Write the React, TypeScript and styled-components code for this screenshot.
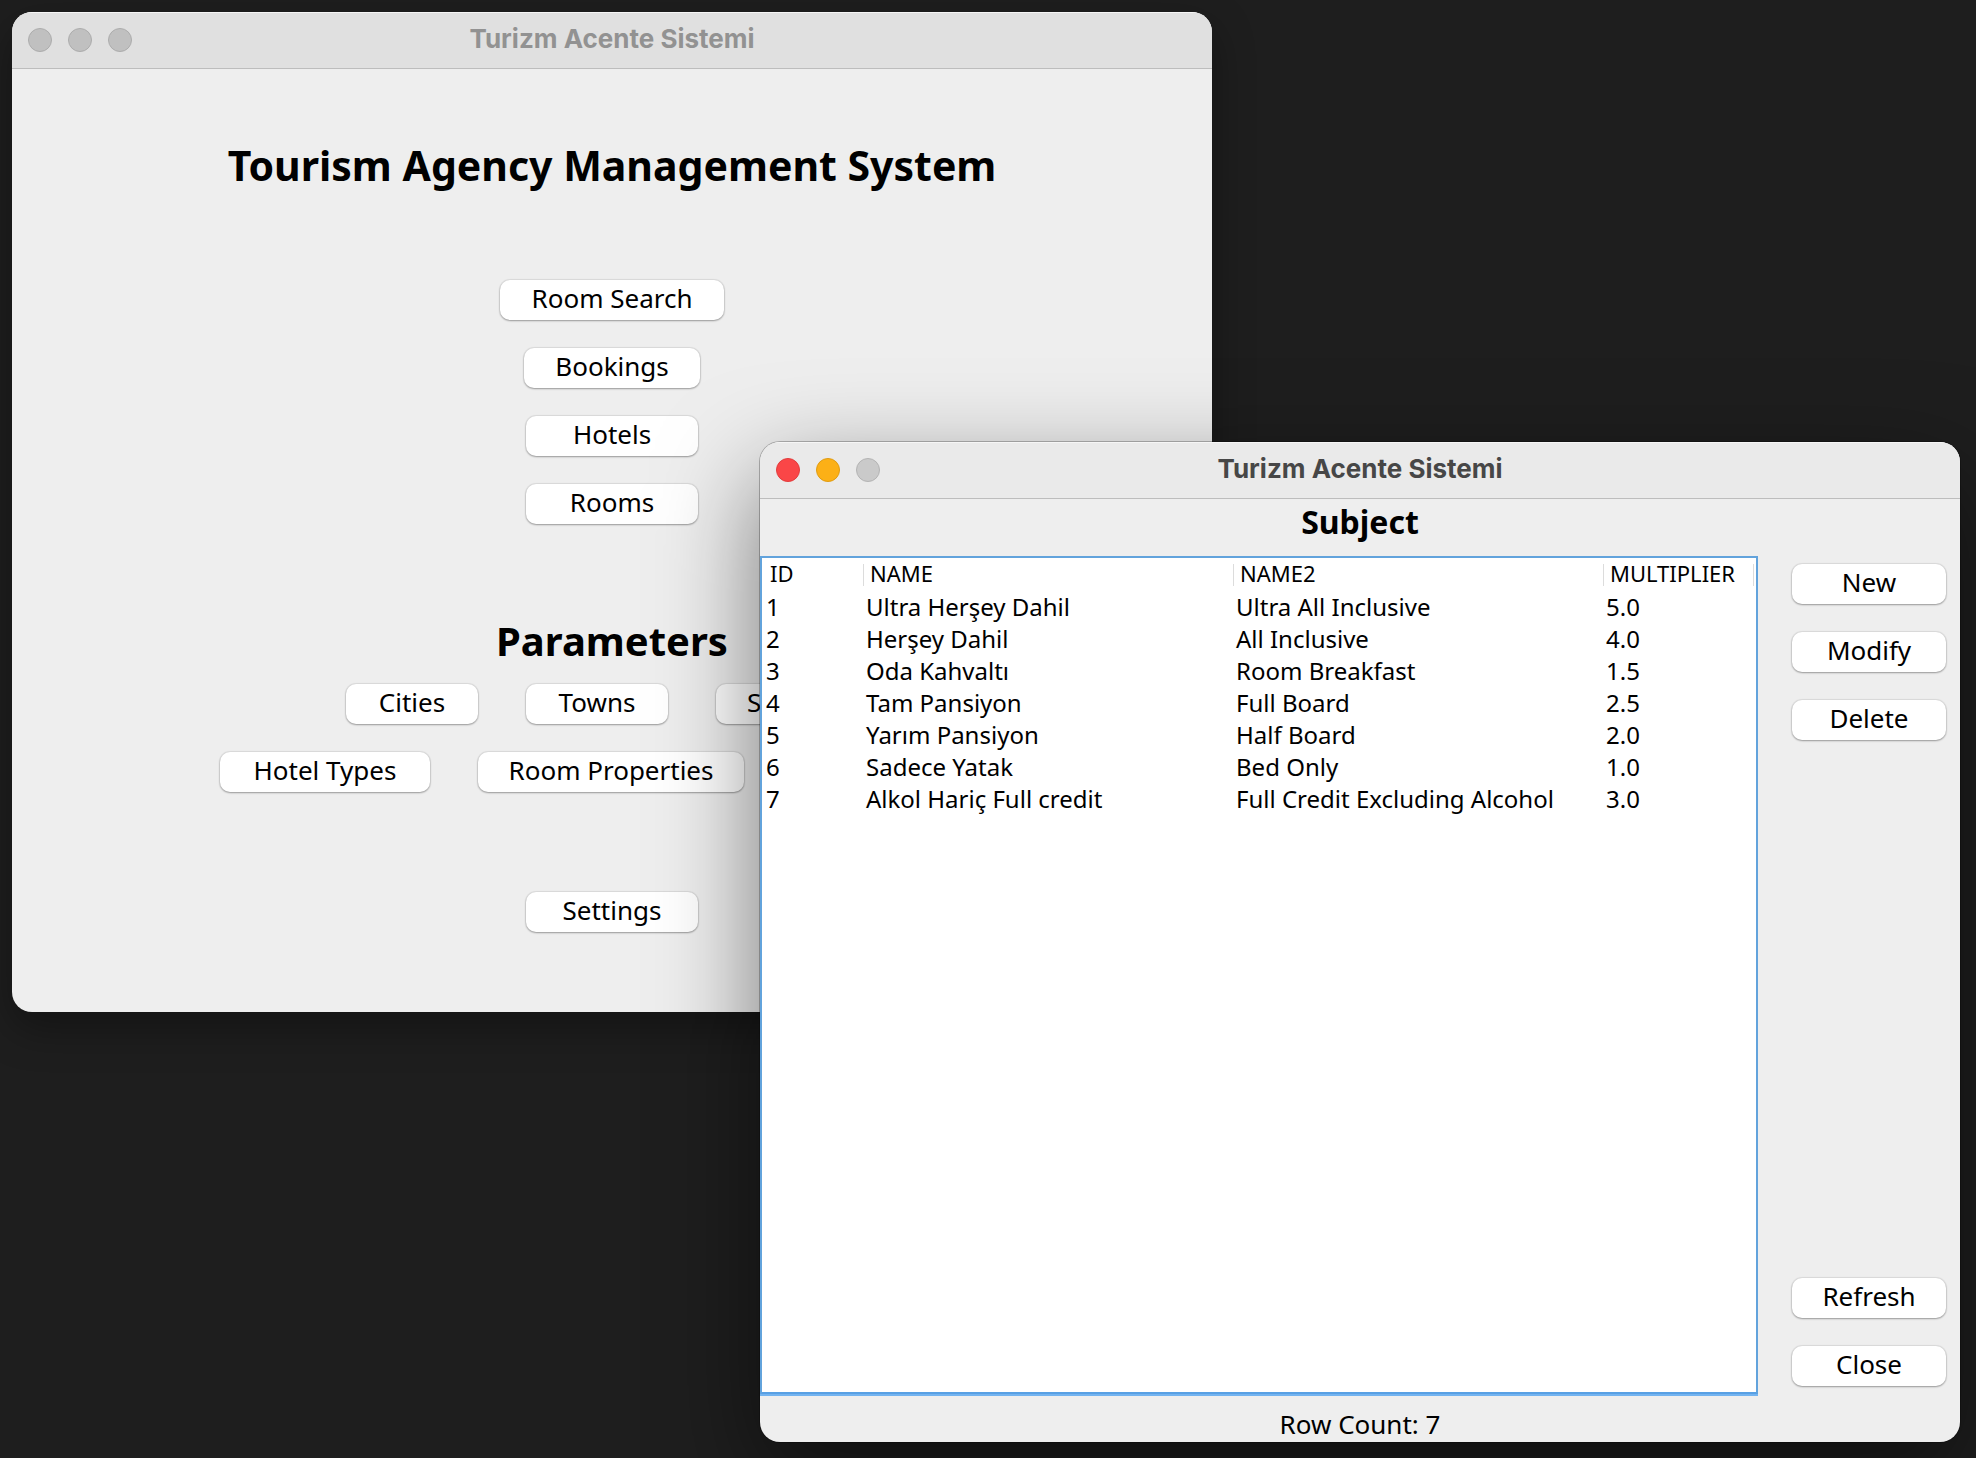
import React from 'react';
import styled, { createGlobalStyle, css } from 'styled-components';

const GlobalStyle = createGlobalStyle`
  *, *::before, *::after { box-sizing: border-box; }
  body { margin: 0; background: #1e1e1e; }
  body, button, table { font-family: 'Noto Sans', 'Open Sans', sans-serif; color: #000; }
`;

const Desktop = styled.div`
  position: relative;
  min-height: 100vh;
  overflow: hidden;
  background: #1e1e1e;
`;

const Window = styled.section<{ $active?: boolean }>`
  position: absolute;
  width: min(1200px, calc(100% - 28px));
  min-height: 1000px;
  display: flex;
  flex-direction: column;
  overflow: hidden;
  border-radius: 20px;
  background: #eeeeee;
  ${({ $active }) =>
    $active
      ? css`
          right: 16px;
          bottom: 16px;
          box-shadow: 0 0 0 1px rgba(0, 0, 0, 0.25), 0 36px 100px rgba(0, 0, 0, 0.5);
        `
      : css`
          left: 12px;
          top: 12px;
          box-shadow: 0 16px 40px rgba(0, 0, 0, 0.35);
        `}
`;

const TitleBar = styled.header<{ $active?: boolean }>`
  display: grid;
  grid-template-columns: 1fr auto 1fr;
  align-items: center;
  height: 57px;
  padding: 0 16px;
  border-bottom: 1px solid #bdbdbd;
  box-shadow: inset 0 1px 0 #f6f6f6;
  background: ${({ $active }) => ($active ? '#eaeaea' : '#e0e0e0')};
  color: ${({ $active }) => ($active ? '#474747' : '#929292')};
`;

const Lights = styled.div`
  display: flex;
  gap: 16px;
`;

const Light = styled.button<{ $fill: string; $edge: string }>`
  width: 24px;
  height: 24px;
  padding: 0;
  border: 1px solid ${({ $edge }) => $edge};
  border-radius: 50%;
  background: ${({ $fill }) => $fill};
`;

const WindowTitle = styled.span`
  padding-bottom: 2px;
  font: 700 26px/32px Inter, 'Liberation Sans', sans-serif;
`;

const PushButton = styled.button<{ $width: number }>`
  height: 40px;
  min-width: ${({ $width }) => $width}px;
  padding: 0 24px 4px;
  border: 0;
  border-radius: 10px;
  background: #fff;
  box-shadow: 0 0 1px 1px rgba(0, 0, 0, 0.08), 0 1px 2px rgba(0, 0, 0, 0.3);
  font-size: 26px;
  line-height: 36px;
  white-space: nowrap;
`;

const Menu = styled.main`
  display: flex;
  flex-direction: column;
  align-items: center;
  padding: 68px 24px 80px;
`;

const Heading = styled.h1<{ $size: number }>`
  margin: 0;
  font-size: ${({ $size }) => $size}px;
  line-height: 56px;
  font-weight: 700;
`;

const Stack = styled.nav`
  display: flex;
  flex-direction: column;
  align-items: center;
  gap: 28px;
  padding: 87px 0 89px;
`;

const Parameters = styled.div`
  display: flex;
  flex-direction: column;
  align-items: center;
  gap: 28px;
  padding: 15px 0 100px;
`;

const Row = styled.div`
  display: flex;
  gap: 48px;
`;

const Subject = styled.h2`
  margin: 0;
  padding-top: 1px;
  height: 57px;
  font-size: 32px;
  line-height: 44px;
  text-align: center;
`;

const Content = styled.div`
  flex: 1;
  display: flex;
`;

const TablePane = styled.div`
  flex: 1;
  padding: 0 2px;
  border: 2px solid #62a3dc;
  border-bottom-color: #58a0e4;
  box-shadow: 0 2px 0 #72b3f0;
  background: #fff;
`;

const DataTable = styled.table`
  width: 100%;
  table-layout: fixed;
  border-collapse: collapse;
  text-align: left;
`;

const Col = styled.col<{ $share: string }>`
  width: ${({ $share }) => $share};
`;

const HeadCell = styled.th`
  padding: 6px 0 5px;
  font-size: 22px;
  font-weight: 400;
`;

const HeadLabel = styled.span`
  display: block;
  height: 22px;
  padding-left: 6px;
  border-right: 1px solid #dcdcdc;
  line-height: 18px;
`;

const Cell = styled.td`
  padding: 0 2px;
  font-size: 24px;
  line-height: 32px;
  white-space: nowrap;
`;

const Actions = styled.aside`
  display: flex;
  flex-direction: column;
  justify-content: space-between;
  padding: 8px 14px 8px 34px;
`;

const ActionGroup = styled.div`
  display: flex;
  flex-direction: column;
  gap: 28px;
`;

const StatusBar = styled.footer`
  height: 48px;
  padding-top: 12px;
  font-size: 26px;
  line-height: 36px;
  text-align: center;
`;

const GREY: [string, string] = ['#c0c0c0', '#acacac'];
const LIGHT_GREY: [string, string] = ['#cacaca', '#b4b4b4'];
const RED: [string, string] = ['#fa4647', '#e23d3d'];
const AMBER: [string, string] = ['#fcb016', '#e09c12'];

const LIGHT_NAMES = ['Close window', 'Minimize window', 'Zoom window'];

function Chrome({ active, lights }: { active?: boolean; lights: [string, string][] }) {
  return (
    <TitleBar $active={active}>
      <Lights>
        {lights.map(([fill, edge], i) => (
          <Light key={LIGHT_NAMES[i]} $fill={fill} $edge={edge} aria-label={LIGHT_NAMES[i]} />
        ))}
      </Lights>
      <WindowTitle>Turizm Acente Sistemi</WindowTitle>
    </TitleBar>
  );
}

const COLUMNS = [
  { title: 'ID', share: '100px' },
  { title: 'NAME', share: 'auto' },
  { title: 'NAME2', share: 'auto' },
  { title: 'MULTIPLIER', share: '150px' },
];

const ROWS = [
  ['1', 'Ultra Herşey Dahil', 'Ultra All Inclusive', '5.0'],
  ['2', 'Herşey Dahil', 'All Inclusive', '4.0'],
  ['3', 'Oda Kahvaltı', 'Room Breakfast', '1.5'],
  ['4', 'Tam Pansiyon', 'Full Board', '2.5'],
  ['5', 'Yarım Pansiyon', 'Half Board', '2.0'],
  ['6', 'Sadece Yatak', 'Bed Only', '1.0'],
  ['7', 'Alkol Hariç Full credit', 'Full Credit Excluding Alcohol', '3.0'],
];

export default function App() {
  return (
    <>
      <GlobalStyle />
      <Desktop>
        <Window>
          <Chrome lights={[GREY, GREY, GREY]} />
          <Menu>
            <Heading $size={41}>Tourism Agency Management System</Heading>
            <Stack>
              <PushButton $width={224}>Room Search</PushButton>
              <PushButton $width={176}>Bookings</PushButton>
              <PushButton $width={172}>Hotels</PushButton>
              <PushButton $width={172}>Rooms</PushButton>
            </Stack>
            <Heading as="h2" $size={40}>Parameters</Heading>
            <Parameters>
              <Row>
                <PushButton $width={132}>Cities</PushButton>
                <PushButton $width={142}>Towns</PushButton>
                <PushButton $width={162}>Seasons</PushButton>
              </Row>
              <Row>
                <PushButton $width={210}>Hotel Types</PushButton>
                <PushButton $width={266}>Room Properties</PushButton>
                <PushButton $width={212} aria-label="Hostel Types" />
              </Row>
            </Parameters>
            <PushButton $width={172}>Settings</PushButton>
          </Menu>
        </Window>

        <Window $active>
          <Chrome active lights={[RED, AMBER, LIGHT_GREY]} />
          <Subject>Subject</Subject>
          <Content>
            <TablePane>
              <DataTable>
                <colgroup>
                  {COLUMNS.map((c) => (
                    <Col key={c.title} $share={c.share} />
                  ))}
                </colgroup>
                <thead>
                  <tr>
                    {COLUMNS.map((c) => (
                      <HeadCell key={c.title} scope="col">
                        <HeadLabel>{c.title}</HeadLabel>
                      </HeadCell>
                    ))}
                  </tr>
                </thead>
                <tbody>
                  {ROWS.map((row) => (
                    <tr key={row[0]}>
                      {row.map((value, i) => (
                        <Cell key={COLUMNS[i].title}>{value}</Cell>
                      ))}
                    </tr>
                  ))}
                </tbody>
              </DataTable>
            </TablePane>
            <Actions>
              <ActionGroup>
                <PushButton $width={154}>New</PushButton>
                <PushButton $width={154}>Modify</PushButton>
                <PushButton $width={154}>Delete</PushButton>
              </ActionGroup>
              <ActionGroup>
                <PushButton $width={154}>Refresh</PushButton>
                <PushButton $width={154}>Close</PushButton>
              </ActionGroup>
            </Actions>
          </Content>
          <StatusBar>Row Count: 7</StatusBar>
        </Window>
      </Desktop>
    </>
  );
}
